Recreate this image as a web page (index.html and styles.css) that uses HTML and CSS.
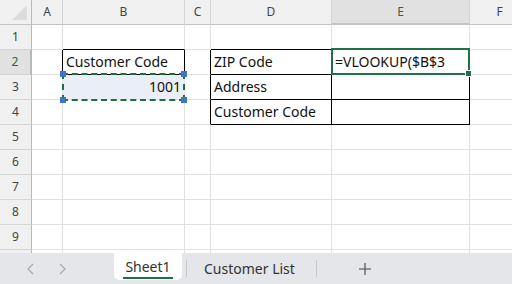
FILE: index.html
```html
<!DOCTYPE html>
<html>
<head>
<meta charset="utf-8">
<link rel="stylesheet" href="styles.css">
</head>
<body>
<div class="app">
  <div class="sheet">
    <div class="grid">
      <div class="c hdr corner"><span class="tri"></span></div>
      <div class="c hdr col">A</div>
      <div class="c hdr col">B</div>
      <div class="c hdr col">C</div>
      <div class="c hdr col">D</div>
      <div class="c hdr col active-col">E</div>
      <div class="c hdr col">F</div>

      <div class="c hdr row">1</div>
      <div class="c"></div>
      <div class="c bb"></div>
      <div class="c"></div>
      <div class="c bb"></div>
      <div class="c bb"></div>
      <div class="c"></div>

      <div class="c hdr row active-row">2</div>
      <div class="c br"></div>
      <div class="c br bb txt">Customer Code</div>
      <div class="c br"></div>
      <div class="c br bb txt">ZIP Code</div>
      <div class="c br bb txt">=VLOOKUP($B$3</div>
      <div class="c"></div>

      <div class="c hdr row">3</div>
      <div class="c"></div>
      <div class="c txt num copied">1001</div>
      <div class="c br"></div>
      <div class="c br bb txt">Address</div>
      <div class="c br bb"></div>
      <div class="c"></div>

      <div class="c hdr row">4</div>
      <div class="c"></div>
      <div class="c"></div>
      <div class="c br"></div>
      <div class="c br bb txt">Customer Code</div>
      <div class="c br bb"></div>
      <div class="c"></div>

      <div class="c hdr row">5</div>
      <div class="c"></div><div class="c"></div><div class="c"></div><div class="c"></div><div class="c"></div><div class="c"></div>
      <div class="c hdr row">6</div>
      <div class="c"></div><div class="c"></div><div class="c"></div><div class="c"></div><div class="c"></div><div class="c"></div>
      <div class="c hdr row">7</div>
      <div class="c"></div><div class="c"></div><div class="c"></div><div class="c"></div><div class="c"></div><div class="c"></div>
      <div class="c hdr row">8</div>
      <div class="c"></div><div class="c"></div><div class="c"></div><div class="c"></div><div class="c"></div><div class="c"></div>
      <div class="c hdr row">9</div>
      <div class="c"></div><div class="c"></div><div class="c"></div><div class="c"></div><div class="c"></div><div class="c"></div>
      <div class="c hdr row"></div>
      <div class="c"></div><div class="c"></div><div class="c"></div><div class="c"></div><div class="c"></div><div class="c"></div>
    </div>
    <div class="copy-sel">
      <span class="h h-tl"></span><span class="h h-tr"></span>
      <span class="h h-bl"></span><span class="h h-br"></span>
    </div>
    <div class="active-sel"><span class="fill"></span></div>
  </div>
  <div class="tabbar">
    <div class="nav">
      <svg class="arrow" width="8" height="12" viewBox="0 0 8 12"><path d="M7 1 L2 6 L7 11" fill="none" stroke="#a9a9a9" stroke-width="1.2"/></svg>
      <svg class="arrow" width="8" height="12" viewBox="0 0 8 12"><path d="M1 1 L6 6 L1 11" fill="none" stroke="#a9a9a9" stroke-width="1.2"/></svg>
    </div>
    <div class="tab current"><span class="label">Sheet1</span></div>
    <div class="sep"></div>
    <div class="tab"><span class="label">Customer List</span></div>
    <div class="sep"></div>
    <div class="add">
      <svg width="12" height="12" viewBox="0 0 12 12"><path d="M6 0 V12 M0 6 H12" stroke="#444" stroke-width="1.1"/></svg>
    </div>
  </div>
</div>
</body>
</html>
```

FILE: styles.css
```css
html, body {
  margin: 0;
  padding: 0;
  background: #fff;
}
.app {
  width: 512px;
  height: 284px;
  overflow: hidden;
  display: flex;
  flex-direction: column;
  font-family: "Noto Sans", "Noto Sans CJK JP", sans-serif;
}
.sheet {
  position: relative;
  height: 253px;
  overflow: hidden;
  flex: none;
}
.grid {
  display: grid;
  grid-template-columns: 32px 31px 122px 26px 121px 138px 60px;
  grid-auto-rows: 25px;
}
.c {
  box-sizing: border-box;
  border-right: 1px solid #e1e1e1;
  border-bottom: 1px solid #e1e1e1;
  font-size: 14px;
  color: #111;
  line-height: 24px;
  white-space: nowrap;
  overflow: hidden;
}
.c.br { border-right-color: #000; }
.c.bb { border-bottom-color: #000; }
.txt { padding-left: 3px; }
.num { text-align: right; padding-right: 3px; }
.copied { background: #e9eef7; }
.hdr {
  background: #f0f0f0;
  color: #444;
  font-size: 12px;
  text-align: center;
  line-height: 24px;
  border-right-color: #d4d4d4;
  border-bottom-color: #d4d4d4;
}
.hdr.col { border-bottom-color: #c4c4c4; }
.hdr.row { border-right-color: #b8b8b8; }
.corner {
  position: relative;
  border-right-color: #b8b8b8;
  border-bottom-color: #c4c4c4;
}
.tri {
  position: absolute;
  right: 4px;
  bottom: 4px;
  width: 0;
  height: 0;
  border-left: 15px solid transparent;
  border-bottom: 15px solid #dcdcdc;
}
.active-col {
  background: #e1e1e1;
  color: #1e6e42;
  border-bottom: 2px solid #1e7145;
  line-height: 23px;
}
.active-row {
  background: #e1e1e1;
  color: #1e6e42;
  border-right: 2px solid #1e7145;
}
.copy-sel {
  position: absolute;
  left: 62px;
  top: 73px;
  width: 119px;
  height: 24px;
  border: 2px dashed #1e6e42;
}
.h {
  position: absolute;
  width: 6px;
  height: 6px;
  background: #3f74c8;
}
.h-tl { left: -4px; top: -4px; }
.h-tr { right: -4px; top: -4px; }
.h-bl { left: -4px; bottom: -4px; }
.h-br { right: -4px; bottom: -4px; }
.active-sel {
  position: absolute;
  left: 331px;
  top: 48px;
  width: 135px;
  height: 23px;
  border: 2px solid #1e7145;
}
.fill {
  position: absolute;
  right: -4px;
  bottom: -4px;
  width: 5px;
  height: 5px;
  background: #1e7145;
  border: 1px solid #fff;
}
.tabbar {
  flex: 1;
  background: #e4e6e9;
  display: flex;
  align-items: stretch;
  font-size: 14px;
  color: #333;
}
.nav {
  width: 114px;
  display: flex;
  align-items: center;
  gap: 25px;
  padding-left: 26px;
  box-sizing: border-box;
}
.arrow {
  display: block;
}
.tab {
  display: flex;
  align-items: center;
  padding: 0 17px;
}
.tab.current {
  background: #fff;
  padding: 0 8px;
  border-radius: 0 0 5px 5px;
  margin-bottom: 4px;
  width: 68px;
  box-sizing: border-box;
  justify-content: center;
}
.tab.current .label {
  border-bottom: 2px solid #1e7145;
  padding: 0 2px 0;
  line-height: 20px;
  margin-top: 2px;
}
.sep {
  width: 1px;
  background: #c8c8c8;
  margin: 7px 0 7px 4px;
}
.add {
  display: flex;
  align-items: center;
  padding-left: 42px;
}
```
